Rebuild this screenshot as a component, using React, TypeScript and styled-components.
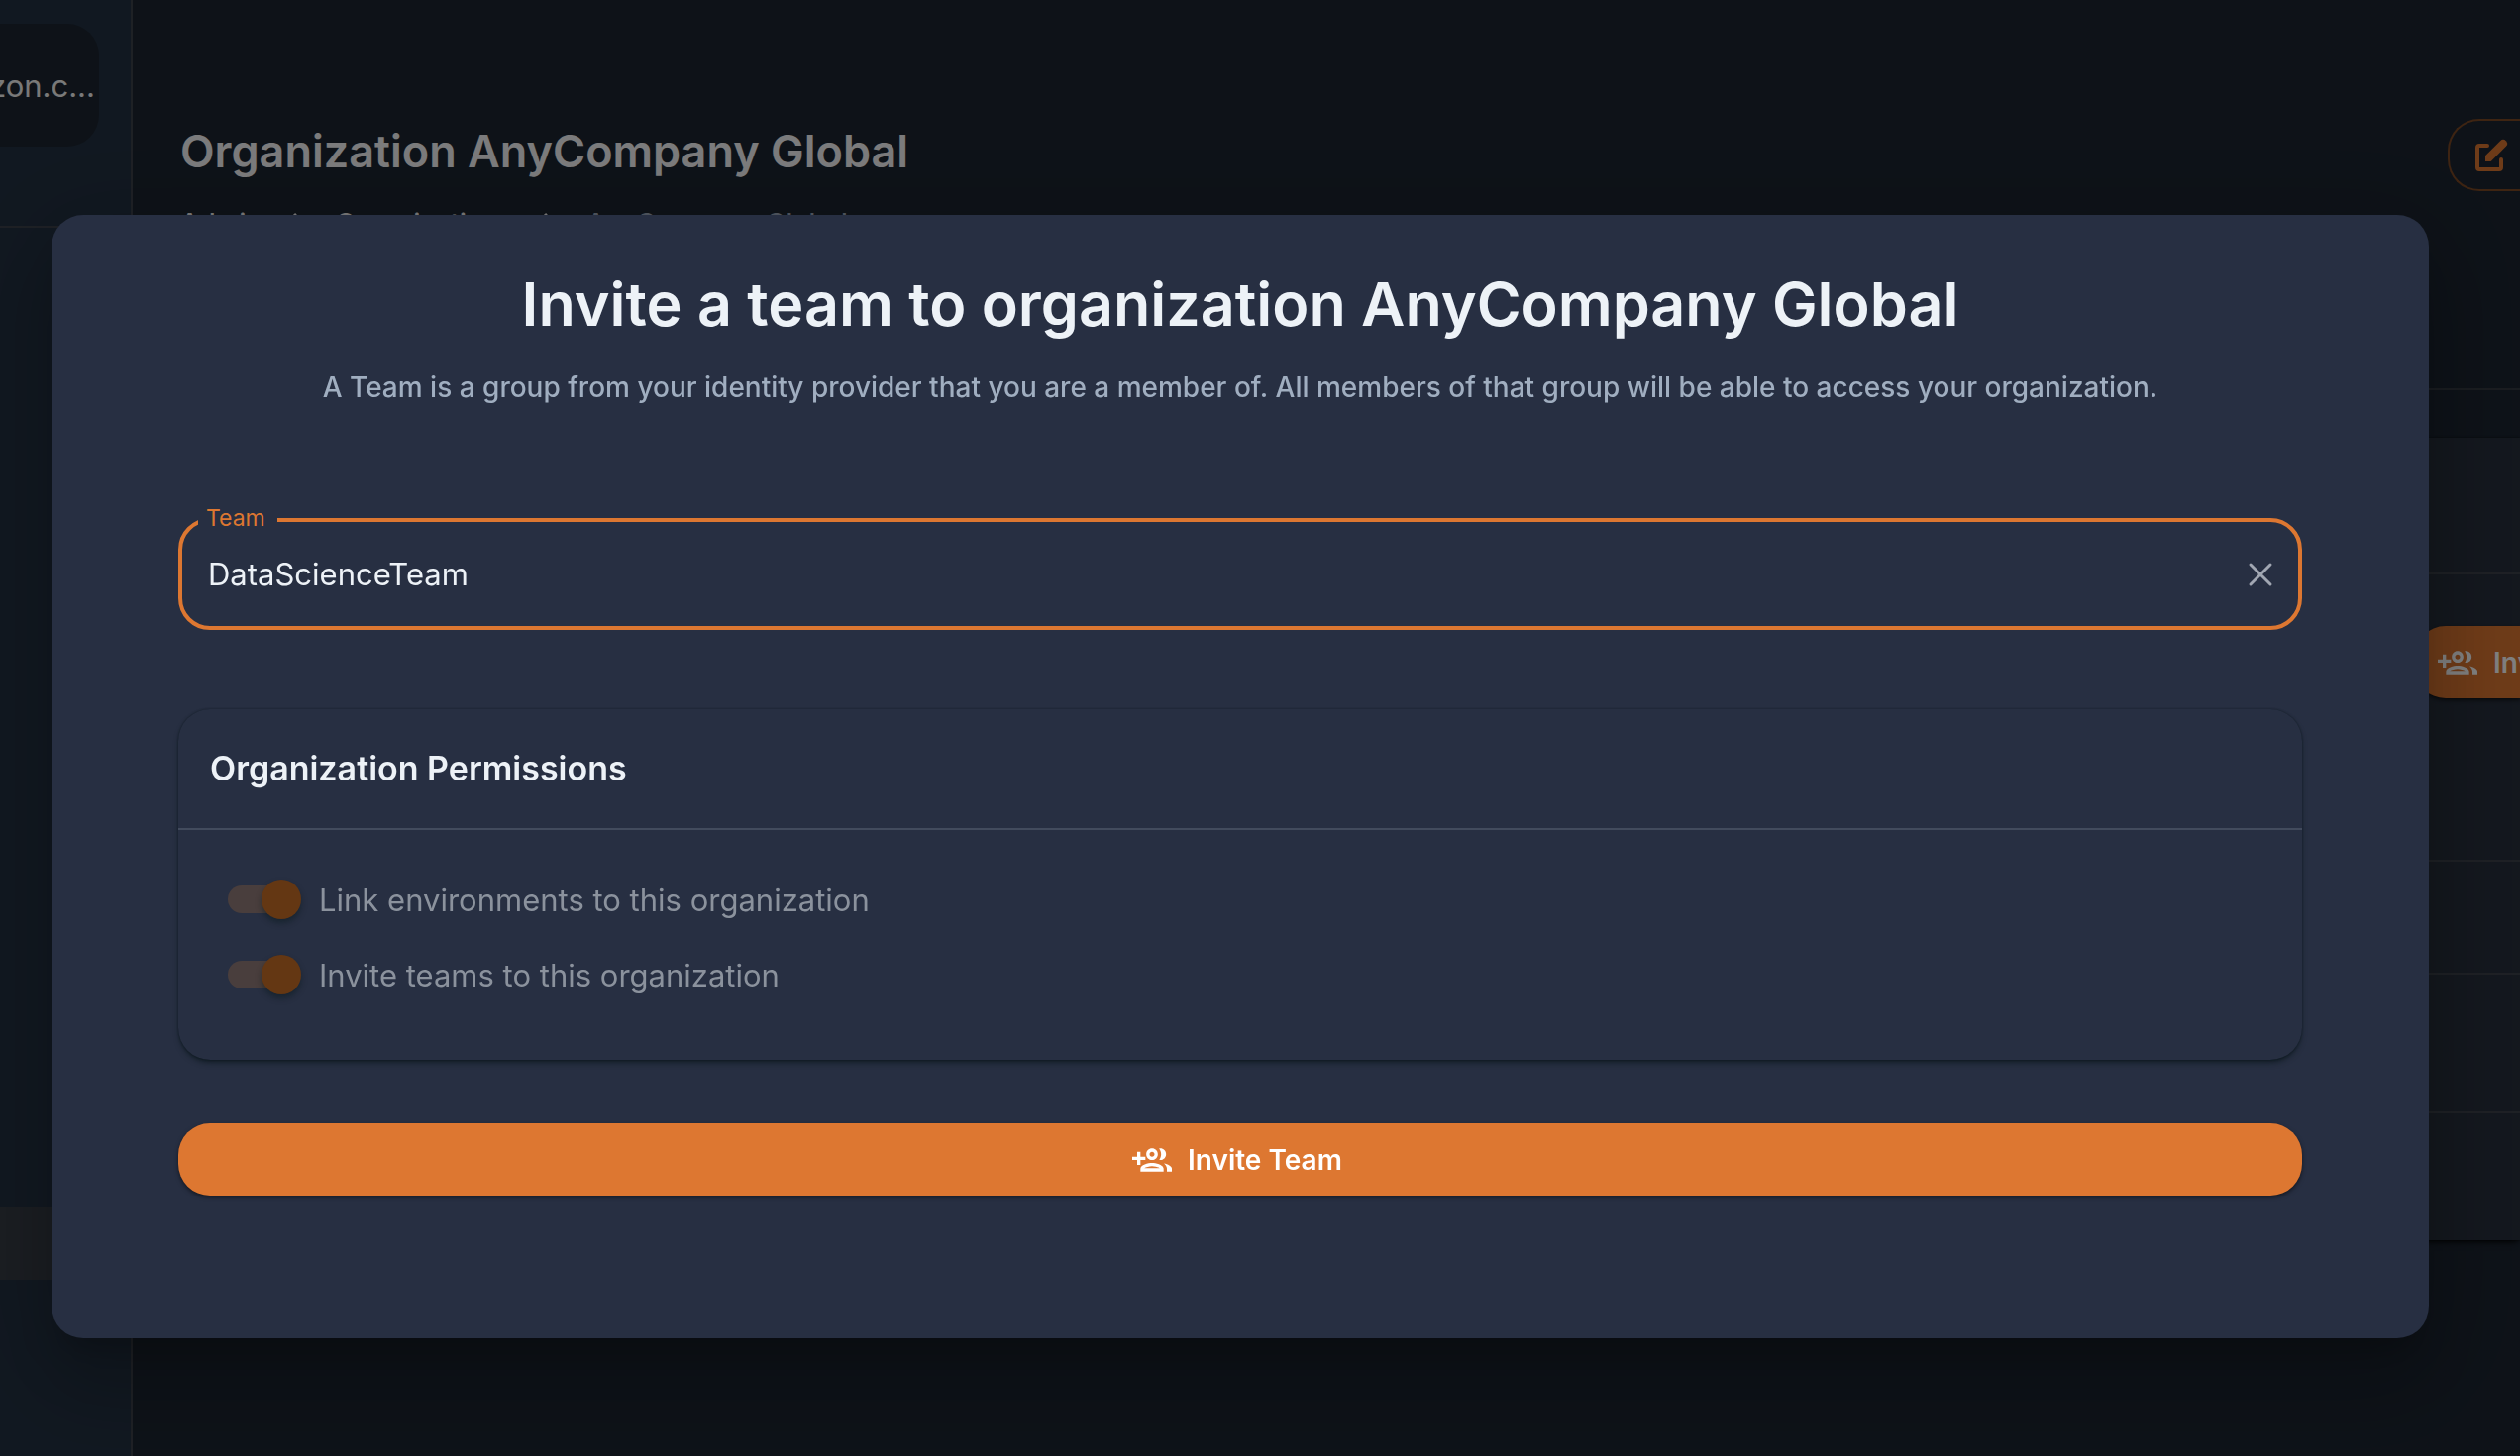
import React, { useState } from 'react';
import styled, { createGlobalStyle } from 'styled-components';

const GlobalStyle = createGlobalStyle`
  *, *::before, *::after { box-sizing: border-box; }
  body {
    margin: 0;
    overflow: hidden;
    background: #1c2531;
    color: #edf2f7;
    font-family: Inter, "Liberation Sans", sans-serif;
    -webkit-font-smoothing: antialiased;
  }
  h1, h2, h3, p { margin: 0; }
  button, input { font: inherit; }
  svg { flex: none; }
`;

const Page = styled.div`
  display: flex;
  height: 100vh;
  overflow: hidden;
`;

const Sidebar = styled.aside`
  display: flex;
  flex-direction: column;
  flex: none;
  width: 134px;
  border-right: 2px solid #3d424b;
  background: #233142;
`;

const AccountArea = styled.div`
  padding: 24px 32px 80px 0;
  border-bottom: 2px solid #3d424b;
`;

const Account = styled.div`
  display: flex;
  align-items: center;
  justify-content: flex-end;
  height: 124px;
  padding: 2px 4px 0 0;
  overflow: hidden;
  border-radius: 0 32px 32px 0;
  background: #1c2531;
  color: #f2f2f2;
  font-size: 31px;
  line-height: 48px;
`;

const SelectedItem = styled.div`
  height: 73px;
  margin-top: auto;
  margin-bottom: 178px;
  background: #363c45;
`;

const Main = styled.main`
  flex: 1;
  min-width: 0;
  overflow: hidden;
`;

const Header = styled.header`
  display: flex;
  justify-content: space-between;
  align-items: flex-start;
  height: 394px;
  padding: 120px 0 0 48px;
  border-bottom: 2px solid #353a42;
`;

const PageTitle = styled.h1`
  color: #f7f7f8;
  font-size: 45px;
  font-weight: 600;
  line-height: 66px;
`;

const Crumbs = styled.nav`
  display: flex;
  align-items: center;
  gap: 27px;
  margin-top: 20px;
  color: #f2f2f2;
  font-size: 27px;
  font-weight: 500;
  line-height: 40px;
  a { color: inherit; text-decoration: none; }
  span { color: #a0aec0; }
`;

const EditButton = styled.button`
  display: flex;
  align-items: center;
  flex: none;
  width: 73px;
  height: 73px;
  padding: 0 0 0 22px;
  border: 2px solid #7c4824;
  border-right: 0;
  border-radius: 32px 0 0 32px;
  background: none;
  color: #dd7731;
`;

const Panel = styled.section`
  height: 810px;
  margin: 48px 0 0 48px;
  background: #28303d;
  box-shadow: 0 0 2px rgba(0, 0, 0, 0.6), 0 4px 6px -2px rgba(0, 0, 0, 0.8);
`;

const PanelRow = styled.div<{ $height: number }>`
  display: flex;
  justify-content: flex-end;
  align-items: flex-start;
  height: ${(p) => p.$height}px;
  padding-top: 52px;
  border-bottom: 2px solid #3d424b;
`;

const PanelInvite = styled.button`
  display: flex;
  align-items: center;
  gap: 16px;
  width: 107px;
  height: 73px;
  padding: 0 0 0 24px;
  overflow: hidden;
  border: 0;
  border-radius: 32px 0 0 32px;
  background: #dd7731;
  color: #fff;
  font-size: 28px;
  font-weight: 600;
  white-space: nowrap;
  box-shadow: 0 2px 4px rgba(0, 0, 0, 0.6);
`;

const Backdrop = styled.div`
  position: fixed;
  inset: 0;
  display: flex;
  align-items: center;
  padding: 98px 92px 0 52px;
  background: rgba(0, 0, 0, 0.5);
`;

const Dialog = styled.div`
  flex: 1;
  padding: 48px 128px 144px;
  border-radius: 32px;
  background: #272f42;
  box-shadow: 0 22px 30px -14px rgba(0, 0, 0, 0.2),
    0 48px 76px 6px rgba(0, 0, 0, 0.14), 0 18px 92px 16px rgba(0, 0, 0, 0.12);
`;

const DialogTitle = styled.h2`
  font-size: 61px;
  font-weight: 600;
  line-height: 84px;
  text-align: center;
`;

const DialogText = styled.p`
  margin-top: 20px;
  color: #a0aec0;
  font-size: 28px;
  font-weight: 500;
  line-height: 44px;
  text-align: center;
`;

const Field = styled.div`
  position: relative;
  display: flex;
  align-items: center;
  height: 113px;
  margin-top: 110px;
  padding: 0 24px 0 26px;
  border: 4px solid #dd7731;
  border-radius: 32px;
`;

const FieldLabel = styled.label`
  position: absolute;
  top: -22px;
  left: 16px;
  padding: 0 12px 0 8px;
  background: #272f42;
  color: #dd7731;
  font-size: 23px;
  line-height: 36px;
`;

const FieldInput = styled.input`
  flex: 1;
  min-width: 0;
  padding: 0;
  border: 0;
  outline: 0;
  background: none;
  color: #edf2f7;
  font-size: 31px;
`;

const ClearButton = styled.button`
  display: flex;
  padding: 0;
  border: 0;
  background: none;
  color: #a1a7b2;
`;

const Card = styled.section`
  margin-top: 80px;
  border-radius: 32px;
  box-shadow: 0 0 2px rgba(8, 20, 24, 0.7), 0 4px 6px -2px rgba(8, 20, 24, 0.8);
`;

const CardTitle = styled.h3`
  padding: 36px 32px;
  border-bottom: 2px solid #424b5d;
  font-size: 34px;
  font-weight: 600;
  line-height: 48px;
`;

const CardBody = styled.div`
  padding: 32px 50px 48px;
`;

const Permission = styled.label`
  display: flex;
  align-items: center;
  gap: 24px;
  height: 76px;
  color: #8b929d;
  font-size: 31px;
`;

const Switch = styled.input`
  appearance: none;
  display: flex;
  align-items: center;
  justify-content: flex-end;
  flex: none;
  width: 68px;
  height: 28px;
  margin: 0;
  border-radius: 14px;
  background: #493e3d;
  &::before {
    content: '';
    flex: none;
    width: 40px;
    height: 40px;
    margin-right: -6px;
    border-radius: 50%;
    background: #643713;
    box-shadow: 0 4px 6px rgba(0, 20, 20, 0.4);
  }
`;

const SubmitButton = styled.button`
  display: flex;
  align-items: center;
  justify-content: center;
  gap: 16px;
  width: 100%;
  height: 73px;
  margin-top: 64px;
  padding: 0 6px 0 0;
  border: 0;
  border-radius: 32px;
  background: #dd7731;
  color: #fff;
  font-size: 28px;
  font-weight: 600;
  box-shadow: 0 2px 4px rgba(0, 0, 0, 0.5);
`;

const GroupAddIcon = () => (
  <svg width="40" height="40" viewBox="0 0 24 24" fill="currentColor" aria-hidden="true">
    <path d="M8 10H5V7H3v3H0v2h3v3h2v-3h3z" />
    <path d="M12 13.75c-2.34 0-7 1.17-7 3.5V19h14v-1.75c0-2.33-4.66-3.5-7-3.5zM7.34 17c.84-.58 2.87-1.25 4.66-1.25s3.82.67 4.66 1.25H7.34zM12 12c1.93 0 3.5-1.57 3.5-3.5S13.93 5 12 5 8.5 6.57 8.5 8.5 10.07 12 12 12zm0-5c.83 0 1.5.67 1.5 1.5S12.83 10 12 10s-1.5-.67-1.5-1.5S11.17 7 12 7z" />
    <path d="M17 12c1.93 0 3.5-1.57 3.5-3.5S18.93 5 17 5c-.24 0-.48.02-.71.07.76.94 1.21 2.13 1.21 3.43s-.45 2.47-1.2 3.41c.23.06.46.09.7.09zM19.2 14.06c.86.77 1.8 1.9 1.8 3.19V19h3v-1.75c0-1.64-2.5-2.7-4.8-3.19z" />
  </svg>
);

const EditIcon = () => (
  <svg width="40" height="40" viewBox="0 0 20 20" fill="currentColor" aria-hidden="true">
    <path d="M17.414 2.586a2 2 0 00-2.828 0L7 10.172V13h2.828l7.586-7.586a2 2 0 000-2.828z" />
    <path d="M2 6a2 2 0 012-2h4a1 1 0 010 2H4v10h10v-4a1 1 0 112 0v4a2 2 0 01-2 2H4a2 2 0 01-2-2V6z" />
  </svg>
);

const CloseIcon = () => (
  <svg width="28" height="28" viewBox="0 0 28 28" fill="none" stroke="currentColor" strokeWidth="3" strokeLinecap="round" aria-hidden="true">
    <path d="M4 4l20 20M24 4L4 24" />
  </svg>
);

const ChevronIcon = () => (
  <svg width="20" height="28" viewBox="0 0 20 28" fill="none" stroke="currentColor" strokeWidth="3" aria-hidden="true">
    <path d="M5 4l9 10-9 10" />
  </svg>
);

const permissions = [
  'Link environments to this organization',
  'Invite teams to this organization',
];

export default function App() {
  const [team, setTeam] = useState('DataScienceTeam');

  return (
    <>
      <GlobalStyle />
      <Page>
        <Sidebar>
          <AccountArea>
            <Account>zon.c...</Account>
          </AccountArea>
          <SelectedItem />
        </Sidebar>
        <Main>
          <Header>
            <div>
              <PageTitle>Organization AnyCompany Global</PageTitle>
              <Crumbs aria-label="Breadcrumb">
                <a href="#admin">Admin</a>
                <ChevronIcon />
                <a href="#organizations">Organizations</a>
                <ChevronIcon />
                <span>AnyCompany Global</span>
              </Crumbs>
            </div>
            <EditButton type="button" aria-label="Edit">
              <EditIcon />
            </EditButton>
          </Header>
          <Panel>
            <PanelRow $height={138} />
            <PanelRow $height={290}>
              <PanelInvite type="button">
                <GroupAddIcon />
                Invite
              </PanelInvite>
            </PanelRow>
            <PanelRow $height={114} />
            <PanelRow $height={140} />
          </Panel>
        </Main>
      </Page>
      <Backdrop>
        <Dialog role="dialog" aria-modal="true" aria-labelledby="invite-title">
          <DialogTitle id="invite-title">
            Invite a team to organization AnyCompany Global
          </DialogTitle>
          <DialogText>
            A Team is a group from your identity provider that you are a member of. All members of
            that group will be able to access your organization.
          </DialogText>
          <Field>
            <FieldLabel htmlFor="team">Team</FieldLabel>
            <FieldInput id="team" value={team} onChange={(e) => setTeam(e.target.value)} />
            <ClearButton type="button" aria-label="Clear" onClick={() => setTeam('')}>
              <CloseIcon />
            </ClearButton>
          </Field>
          <Card>
            <CardTitle>Organization Permissions</CardTitle>
            <CardBody>
              {permissions.map((name) => (
                <Permission key={name}>
                  <Switch type="checkbox" role="switch" defaultChecked disabled />
                  {name}
                </Permission>
              ))}
            </CardBody>
          </Card>
          <SubmitButton type="button">
            <GroupAddIcon />
            Invite Team
          </SubmitButton>
        </Dialog>
      </Backdrop>
    </>
  );
}
